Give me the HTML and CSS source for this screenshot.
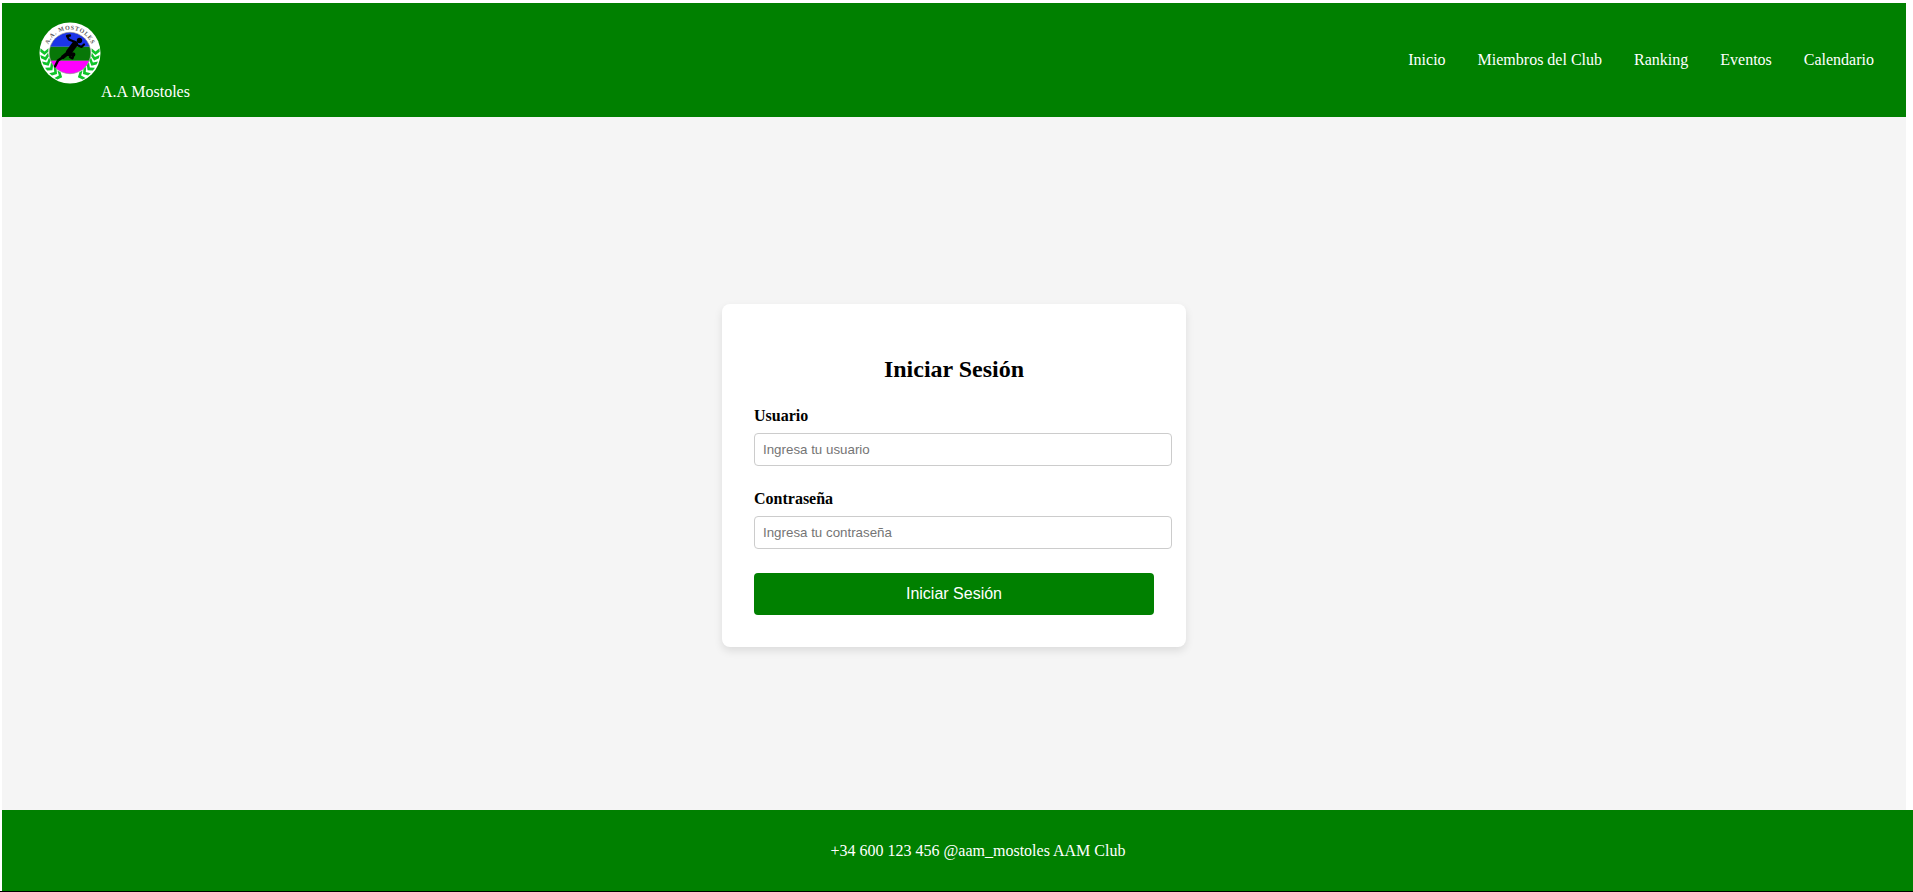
FILE: index.html
```html
<!DOCTYPE html>
<html lang="es">
<head>
<meta charset="utf-8">
<title>Iniciar Sesión - A.A Mostoles</title>
<link rel="stylesheet" href="styles.css">
</head>
<body>
<div class="page">
  <header class="header">
    <div class="brand">
      <svg class="logo" viewBox="0 0 62 62" role="img" aria-label="A.A. Mostoles">
        <defs>
          <clipPath id="disc"><circle cx="31" cy="31" r="20.7"/></clipPath>
          <path id="arc" d="M8.500 37A23.300 23.300 0 1 1 53.500 37"/>
          <path id="leaf" d="M0 2.600L-4.200 -.6L-4.200 -4L0 -1L3.800 -4.500L3.800 -1Z"/>
          <g id="branch" fill="#10c42a">
            <use href="#leaf" transform="translate(5.500 30.500) rotate(2)"/>
            <use href="#leaf" transform="translate(6.300 36) rotate(-12)"/>
            <use href="#leaf" transform="translate(8.500 41.300) rotate(-25)"/>
            <use href="#leaf" transform="translate(11.800 46.300) rotate(-38)"/>
            <use href="#leaf" transform="translate(16 50.500) rotate(-52)"/>
            <use href="#leaf" transform="translate(20.800 54) rotate(-64)"/>
          </g>
        </defs>
        <circle cx="31" cy="31" r="30.5" fill="#fff"/>
        <g clip-path="url(#disc)">
          <rect x="10" y="10" width="42" height="14.800" fill="#1c35e8"/>
          <rect x="10" y="24.800" width="42" height="14" fill="#087708"/>
          <rect x="10" y="38.800" width="42" height="14" fill="#f0f"/>
        </g>
        <circle cx="31" cy="31" r="20.700" fill="none" stroke="#888" stroke-width=".6"/>
        <use href="#branch"/>
        <use href="#branch" transform="translate(62 0) scale(-1 1)"/>
        <text class="logo-text"><textPath href="#arc" startOffset="50%">A.A. MOSTOLES</textPath></text>
        <g fill="none" stroke="#000" stroke-linecap="round" stroke-linejoin="round">
          <path stroke-width="6" d="M36 22L30 30"/>
          <path stroke-width="3.800" d="M29 31L24 35"/>
          <path stroke-width="2.500" d="M24 35L19 38.500L16 44.500"/>
          <path stroke-width="3.800" d="M29 32L34.500 32.500"/>
          <path stroke-width="2.200" d="M34.500 33L33.500 36.500L31 35"/>
          <path stroke-width="2.300" d="M36 20L30 17.500L28 14L31 13.500"/>
          <path stroke-width="2.200" d="M38 23L42.500 25L45 22.500"/>
        </g>
        <circle cx="40.500" cy="18.500" r="2.700"/>
      </svg><span class="brand-name">A.A Mostoles</span>
    </div>
    <nav class="nav">
      <a>Inicio</a><a>Miembros del Club</a><a>Ranking</a><a>Eventos</a><a>Calendario</a>
    </nav>
  </header>
  <main class="main">
    <form class="card">
      <h2>Iniciar Sesión</h2>
      <label for="user">Usuario</label>
      <input id="user" type="text" placeholder="Ingresa tu usuario">
      <label for="pass">Contraseña</label>
      <input id="pass" type="password" placeholder="Ingresa tu contraseña">
      <button type="button">Iniciar Sesión</button>
    </form>
  </main>
  <footer class="footer">+34 600 123 456 @aam_mostoles AAM Club</footer>
</div>
</body>
</html>
```
FILE: styles.css
```css
body {
  margin: 0;
  height: 892px;
  box-sizing: border-box;
  overflow: hidden;
  background: #fff;
  border-bottom: 1px solid #000;
  font: 16px/18px "Liberation Serif", "Times New Roman", serif;
}
.page {
  display: flex;
  flex-direction: column;
  width: 1904px;
  height: 891px;
  box-sizing: border-box;
  padding-top: 3px;
  margin-left: 2px;
}
.header {
  display: flex;
  flex: none;
  justify-content: space-between;
  align-items: center;
  box-sizing: border-box;
  height: 114px;
  padding: 0 32px 0 37px;
  background: green;
  color: #fff;
}
.brand {
  display: flex;
  align-items: flex-end;
  padding-top: 3px;
}
.logo {
  width: 62px;
  height: 62px;
  margin-bottom: 17px;
}
.logo-text {
  font: bold 6px "Liberation Serif", serif;
  letter-spacing: .7px;
  text-anchor: middle;
  fill: #555;
}
.nav {
  display: flex;
  gap: 32px;
}
.main {
  display: flex;
  flex: 1;
  justify-content: center;
  align-items: flex-start;
  padding-top: 187px;
  background: #f5f5f5;
}
.card {
  box-sizing: border-box;
  width: 464px;
  height: 343px;
  padding: 32px;
  border-radius: 8px;
  background: #fff;
  box-shadow: 0 4px 8px rgba(0, 0, 0, .1);
}
.card h2 {
  margin: 20px 0;
  font-size: 24px;
  line-height: 27px;
  text-align: center;
}
.card label {
  display: block;
  margin-bottom: 8px;
  padding-top: 4px;
  font-weight: bold;
  line-height: 18px;
}
.card input {
  display: block;
  box-sizing: border-box;
  width: 418px;
  height: 33px;
  margin: 0 0 20px;
  padding: 8px;
  border: 1px solid #ccc;
  border-radius: 4px;
  font: 13.333px "Liberation Sans", Arial, sans-serif;
}
.card input::placeholder {
  color: #757575;
}
.card button {
  display: block;
  width: 400px;
  height: 42px;
  margin-top: 24px;
  padding: 0;
  border: 0;
  border-radius: 4px;
  background: green;
  color: #fff;
  font: 16px "Liberation Sans", Arial, sans-serif;
}
.footer {
  flex: none;
  box-sizing: border-box;
  width: 1952px;
  height: 81px;
  padding-top: 32px;
  background: green;
  color: #fff;
  text-align: center;
}
```
